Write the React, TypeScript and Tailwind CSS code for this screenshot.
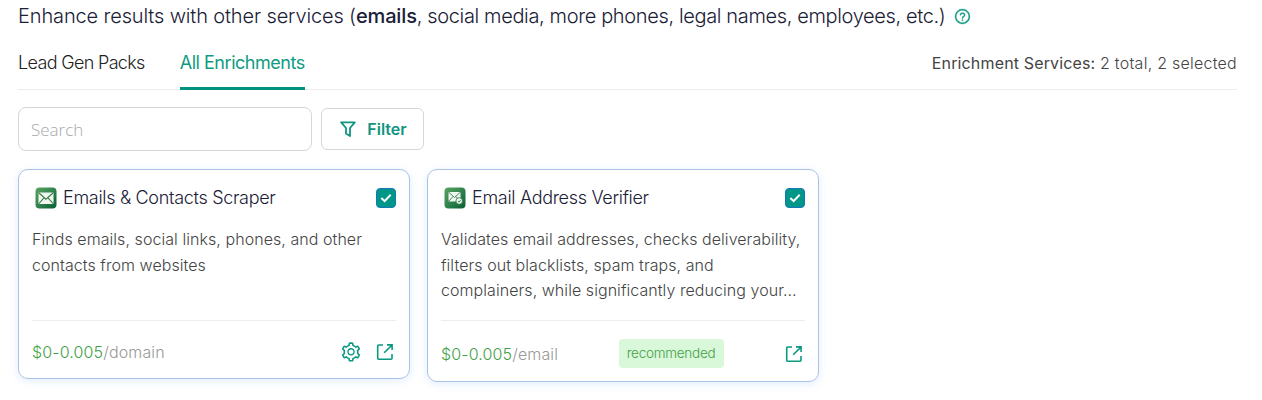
import React from 'react';
import { AiOutlineQuestionCircle, AiOutlineSetting } from 'react-icons/ai';

interface Service {
  name: string;
  description: string;
  price: string;
  unit: string;
  verified: boolean;
  recommended: boolean;
  configurable: boolean;
}

const services: Service[] = [
  {
    name: 'Emails & Contacts Scraper',
    description: 'Finds emails, social links, phones, and other contacts from websites',
    price: '$0-0.005',
    unit: 'domain',
    verified: false,
    recommended: false,
    configurable: true,
  },
  {
    name: 'Email Address Verifier',
    description:
      'Validates email addresses, checks deliverability, filters out blacklists, spam traps, and complainers, while significantly reducing your…',
    price: '$0-0.005',
    unit: 'email',
    verified: true,
    recommended: true,
    configurable: false,
  },
];

const MailIcon: React.FC<{ verified: boolean }> = ({ verified }) => (
  <svg width="22" height="22" viewBox="0 0 22 22" fill="none">
    <defs>
      <linearGradient id="mail-bg" x1="0" y1="0" x2="1" y2="1">
        <stop offset="0" stopColor="#5ba564" />
        <stop offset="1" stopColor="#075f35" />
      </linearGradient>
    </defs>
    <rect x="0.5" y="0.5" width="21" height="21" rx="4" fill="url(#mail-bg)" />
    {verified ? (
      <>
        <rect x="4.5" y="5" width="12" height="9.5" rx="1" fill="#f0f7f1" />
        <path d="M5 5.5l5.5 5 5.5-5M5 14l4-4.5M16 14l-4-4.5" stroke="#357c46" strokeWidth="0.9" />
        <circle cx="15.2" cy="14" r="3.3" fill="#f0f7f1" stroke="#1f7040" strokeWidth="0.8" />
        <path d="M13.8 14l1.1 1.1 1.8-2" stroke="#1f7040" strokeWidth="0.9" />
      </>
    ) : (
      <>
        <rect x="3.5" y="5.5" width="15" height="11.5" rx="1" fill="#f0f7f1" />
        <path d="M4 6l7 6.2L18 6M4 16.5l5.2-5.8M18 16.5l-5.2-5.8" stroke="#357c46" strokeWidth="1.1" />
      </>
    )}
  </svg>
);

const FilterIcon = () => (
  <svg width="16" height="16" viewBox="0 0 16 16" fill="none" stroke="currentColor" strokeWidth="1.8" strokeLinejoin="round">
    <path d="M1.2 1.3h13.6L10 7v8l-4-2.6V7z" />
  </svg>
);

const OpenIcon = () => (
  <svg width="18" height="18" viewBox="0 0 18 18" fill="none" stroke="currentColor" strokeWidth="1.6">
    <path d="M7 2H2.7a1 1 0 0 0-1 1v12.3a1 1 0 0 0 1 1H15a1 1 0 0 0 1-1V11" />
    <path d="M11 1.9h5.1V7M15.8 2.2L8.2 9.8" />
  </svg>
);

const CheckedBox = () => (
  <span className="flex h-5 w-5 items-center justify-center rounded border border-[#1677b8] bg-[#009688] text-white">
    <svg width="12" height="12" viewBox="0 0 12 12" fill="none" stroke="currentColor" strokeWidth="2">
      <path d="M1.3 6l3.3 3.2L10.7 2.8" />
    </svg>
  </span>
);

const ServiceCard: React.FC<{ service: Service }> = ({ service }) => (
  <div className="w-[392px] rounded-[10px] border border-[#a9c2e8] px-[13px] pt-[17px] shadow-[0_2px_8px_rgba(22,119,255,0.13)]">
    <div className="flex h-[22px] items-center justify-between pl-[2.5px]">
      <div className="flex items-center gap-[6.5px]">
        <MailIcon verified={service.verified} />
        <span className="pb-[2px] text-[18px] tracking-[-0.31px] text-[#1a2036]">{service.name}</span>
      </div>
      <CheckedBox />
    </div>
    <p className="mt-[18px] h-[78px] text-[16px] leading-[25.6px] tracking-[0.06px] text-[#444]">
      {service.description}
    </p>
    <div className="mt-[15px] border-t border-[#ededed]" />
    <div
      className={
        service.recommended
          ? 'flex h-[60px] items-center justify-between pt-[5px]'
          : 'flex h-[57px] items-center justify-between pt-[4px]'
      }
    >
      <span className="text-[16px] tracking-[0.14px] text-[#999]">
        <span className="text-[#43a047]">{service.price}</span>/{service.unit}
      </span>
      {service.recommended && (
        <span className="-ml-px flex h-[29px] w-[105px] items-center justify-center rounded bg-[#d9f7d9] text-[13.5px] tracking-[-0.25px] text-[#43a047]">
          recommended
        </span>
      )}
      <div className="flex items-center gap-[14px] pr-[2px] text-[#099981]">
        {service.configurable && <AiOutlineSetting size={22} />}
        <OpenIcon />
      </div>
    </div>
  </div>
);

export default function App() {
  return (
    <div className="h-[400px] w-[1262px] overflow-hidden bg-white pl-[18px] pr-[25px] font-['Inter',sans-serif] font-light">
      <div className="flex h-8 items-center gap-[9px] text-[20px] text-[#1a2036]">
        <span className="whitespace-nowrap tracking-[-0.36px]">
          <span className="tracking-[-0.14px]">Enhance results with other services (</span>
          <strong className="font-medium tracking-[-0.15px]">emails</strong>, social media, more phones, legal names, employees,
          etc.)
        </span>
        <AiOutlineQuestionCircle size={17} className="stroke-[#0f9b83] stroke-[20] text-[#0f9b83]" />
      </div>
      <div className="flex h-[58px] items-stretch justify-between border-b border-[#ededed] text-[18px]">
        <div className="flex gap-[35px]">
          <span className="flex items-center pt-1 tracking-[-0.67px] text-[#222]">Lead Gen Packs</span>
          <span className="-mb-px flex items-center border-b-[3px] border-[#00917f] pt-[6px] font-normal tracking-[-0.47px] text-[#0f9b83]">
            All Enrichments
          </span>
        </div>
        <span className="flex items-center whitespace-pre pt-[5px] text-[16px] tracking-[0.25px] text-[#444]">
          <span className="font-normal tracking-[0.15px]">Enrichment Services: </span>2 total, 2 selected
        </span>
      </div>
      <div className="mt-[17px] flex items-center gap-[9px]">
        <input
          type="text"
          placeholder="Search"
          className="h-11 w-[294px] rounded-lg border border-[#d6d6d9] px-3 font-['Open_Sans',sans-serif] text-[17px] placeholder:text-[#a8a8ad]"
        />
        <button className="flex h-[42px] w-[103px] items-center justify-center gap-[11px] rounded-md border border-[#d6d6d9] pl-[2px] text-[16px] font-semibold text-[#0f9580]">
          <FilterIcon />
          Filter
        </button>
      </div>
      <div className="mt-[18px] flex items-start gap-[17px]">
        {services.map(service => <ServiceCard key={service.name} service={service} />)}
      </div>
    </div>
  );
}
